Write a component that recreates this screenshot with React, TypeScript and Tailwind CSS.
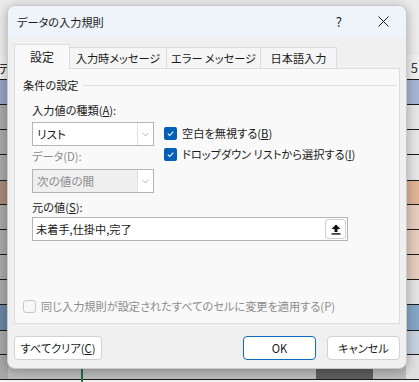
import { ChevronDown } from "lucide-react";

const FONT = {
  fontFamily: '"Noto Sans CJK JP", "Noto Sans", sans-serif',
};

type Row = { h: number; left: string; right: string };

// 背景のシートの行 (左端の列と右端の列だけ見えている)
const rows: Row[] = [
  { h: 24, left: "bg-[#97a4c3]", right: "bg-[#a6b5d7]" },
  { h: 24, left: "bg-[#a9a9a9]", right: "bg-[#e6e6e6]" },
  { h: 24, left: "bg-[#a9a9a9]", right: "bg-[#e6e6e6]" },
  { h: 25, left: "bg-[#a9a9a9]", right: "bg-[#e6e6e6]" },
  { h: 23, left: "bg-[#a88b78]", right: "bg-[#dfb396]" },
  { h: 24, left: "bg-[#a9a9a9]", right: "bg-[#e6cdbd]" },
  { h: 24, left: "bg-[#a9a9a9]", right: "bg-[#e6cdbd]" },
  { h: 24, left: "bg-[#a9a9a9]", right: "bg-[#e6cdbd]" },
  { h: 24, left: "bg-[#a9a9a9]", right: "bg-[#e3e3e3]" },
  { h: 25, left: "bg-[#6c86a3]", right: "bg-[#86a6c6]" },
  { h: 23, left: "bg-[#a9a9a9]", right: "bg-[#c6d2de]" },
  { h: 24, left: "bg-[#a9a9a9]", right: "bg-[#e0e0e0]" },
];

function Sheet() {
  return (
    <div className="flex h-full w-full flex-col bg-[#f3f3f3]">
      <div className="h-[55px] bg-[#ececec]" />
      <div className="flex h-[24px] items-center justify-between bg-[#f0f0f0] text-[13px] leading-none text-[#333]">
        <span className="-ml-[2px]">テ</span>
        <span className="mr-[1px]">5</span>
      </div>
      {rows.map((r, i) => (
        <div key={i} className="flex border-t border-[#1b1b1b]" style={{ height: r.h + 1 }}>
          <div className={`w-[8px] ${r.left}`} />
          <div className="flex-1 bg-[#bdbdbd]" />
          <div className={`w-[13px] ${r.right}`} />
        </div>
      ))}
      <div className="flex flex-1 border-t border-[#1b1b1b] bg-[#f4f4f4]" />
    </div>
  );
}

function Check({ on = true, disabled = false }: { on?: boolean; disabled?: boolean }) {
  if (!on) {
    return (
      <span
        className={`inline-block h-[13px] w-[13px] shrink-0 rounded-[3px] border ${
          disabled ? "border-[#c8c8c8] bg-[#f7f7f7]" : "border-[#8a8a8a] bg-white"
        }`}
      />
    );
  }
  return (
    <span className="flex h-[13px] w-[13px] shrink-0 items-center justify-center rounded-[2px] bg-[#005fb8]">
      <svg width="9" height="9" viewBox="0 0 9 9" fill="none">
        <path d="M1.8 4.7 L3.7 6.5 L7.3 2.6" stroke="white" strokeWidth="1.1" />
      </svg>
    </span>
  );
}

function Select({ value, disabled = false }: { value: string; disabled?: boolean }) {
  return (
    <div
      className={`flex h-[24px] w-[122px] shrink-0 border border-[#b4b4b4] ${
        disabled ? "bg-[#efefef] text-[#8c8c8c]" : "bg-white text-[#1a1a1a]"
      }`}
    >
      <div className="flex flex-1 items-center pl-[4px] text-[11.6px]">{value}</div>
      <div className="flex w-[16px] items-center justify-center border-l border-[#e2e2e2] bg-white">
        <ChevronDown size={11} strokeWidth={1.2} className="text-[#777]" />
      </div>
    </div>
  );
}

function Btn({ children, primary = false, w }: { children: React.ReactNode; primary?: boolean; w: string }) {
  return (
    <button
      type="button"
      className={`flex h-[24px] ${w} items-center justify-center rounded-[4px] border bg-white text-[#1a1a1a] ${
        primary ? "border-[#0f6cbd]" : "border-[#d2d2d2]"
      }`}
    >
      <span className="whitespace-nowrap">{children}</span>
    </button>
  );
}

export default function App() {
  return (
    <div
      className="relative h-[382px] w-[419px] overflow-hidden text-[11.2px] leading-[18px] [font-feature-settings:'palt']"
      style={FONT}
    >
      <Sheet />
      {/* 下端の列のしるし */}
      <div className="absolute left-[81px] top-[362px] h-[20px] w-[1.5px] bg-[#1e7145]" />
      <div className="absolute left-[316px] top-[362px] h-[17px] w-[57px] bg-[#5f5f5f]" />

      <div className="absolute left-[7px] top-[5px] flex h-[364px] w-[400px] flex-col overflow-hidden rounded-[8px] border border-[#c9c9c9] bg-[#f0f0f0] shadow-[0_2px_12px_rgba(0,0,0,0.3)]">
        {/* タイトルバー */}
        <div className="flex h-[31px] shrink-0 items-center bg-[#eef4f9] pl-[9px] text-[#1a1a1a]">
          <span className="flex-1">データの入力規則</span>
          <span className="mr-[36px] text-[13px]">?</span>
          <svg width="11" height="11" viewBox="0 0 11 11" className="mr-[17px]">
            <path d="M0.5 0.5 L10.5 10.5 M10.5 0.5 L0.5 10.5" stroke="#1a1a1a" strokeWidth="1" />
          </svg>
        </div>

        {/* タブ */}
        <div className="ml-[6px] mt-[7px] flex h-[24px] items-end whitespace-nowrap text-[#1a1a1a]">
          <div className="relative z-10 -mb-px flex h-[25px] w-[56px] items-center justify-center border border-b-0 border-[#dcdcdc] bg-[#f9f9f9] text-[12px]">
            設定
          </div>
          <div className="flex h-[21px] w-[97px] items-center justify-center border border-l-0 border-b-0 border-[#dcdcdc] bg-[#f5f5f5]">
            入力時メッセージ
          </div>
          <div className="flex h-[21px] w-[94px] items-center justify-center border border-l-0 border-b-0 border-[#dcdcdc] bg-[#f5f5f5]">
            エラー メッセージ
          </div>
          <div className="flex h-[21px] w-[76px] items-center justify-center border border-l-0 border-b-0 border-[#dcdcdc] bg-[#f5f5f5]">
            日本語入力
          </div>
        </div>

        {/* 設定パネル */}
        <div className="mx-[6px] flex h-[256px] flex-col border border-[#dcdcdc] bg-[#f9f9f9] text-[#1a1a1a]">
          <div className="mt-[7px] flex items-center pl-[8px] pr-[2px]">
            <span>条件の設定</span>
            <span className="ml-[4px] h-px flex-1 bg-[#dcdcdc]" />
          </div>

          <div className="mt-[7px] pl-[17px]">
            入力値の種類(<span className="underline">A</span>):
          </div>
          <div className="mt-[3px] flex h-[24px] items-start pl-[17px]">
            <Select value="リスト" />
            <div className="ml-[10px] flex flex-col gap-[6px] whitespace-nowrap pt-[4px]">
              <label className="flex items-center gap-[5px] leading-[15px]">
                <Check />
                <span>
                  空白を無視する(<span className="underline">B</span>)
                </span>
              </label>
              <label className="flex items-center gap-[5px] leading-[15px]">
                <Check />
                <span>
                  ドロップダウン リストから選択する(<span className="underline">I</span>)
                </span>
              </label>
            </div>
          </div>

          <div className="mt-[2px] pl-[17px] leading-[16px] text-[#8c8c8c]">データ(D):</div>
          <div className="mt-[5px] pl-[17px]">
            <Select value="次の値の間" disabled />
          </div>

          <div className="mt-[5px] pl-[17px]">
            元の値(<span className="underline">S</span>):
          </div>
          <div className="ml-[17px] mt-[1px] flex h-[24px] w-[316px] items-center border border-[#b4b4b4] bg-white pl-[3px] pr-[1px]">
            <span className="flex-1 text-[#1a1a1a]">未着手,仕掛中,完了</span>
            <span className="flex h-[20px] w-[21px] items-center justify-center rounded-[3px] border border-[#d0d0d0] bg-white">
              <svg width="10" height="11" viewBox="0 0 10 11">
                <path d="M5 0.5 L9.5 5 L6.5 5 L6.5 8 L3.5 8 L3.5 5 L0.5 5 Z" fill="#111" />
                <rect x="0.5" y="9.2" width="9" height="1.4" fill="#111" />
              </svg>
            </span>
          </div>

          <label className="mb-[8px] mt-auto flex items-center gap-[5px] whitespace-nowrap pl-[8px] text-[#8c8c8c]">
            <Check on={false} disabled />
            <span>同じ入力規則が設定されたすべてのセルに変更を適用する(P)</span>
          </label>
        </div>

        {/* ボタン */}
        <div className="mt-[12px] flex px-[6px]">
          <Btn w="w-[88px]">
            すべてクリア(<span className="underline">C</span>)
          </Btn>
          <div className="flex-1" />
          <Btn w="w-[73px]" primary>
            OK
          </Btn>
          <div className="w-[11px]" />
          <Btn w="w-[73px]">キャンセル</Btn>
        </div>
      </div>
    </div>
  );
}
